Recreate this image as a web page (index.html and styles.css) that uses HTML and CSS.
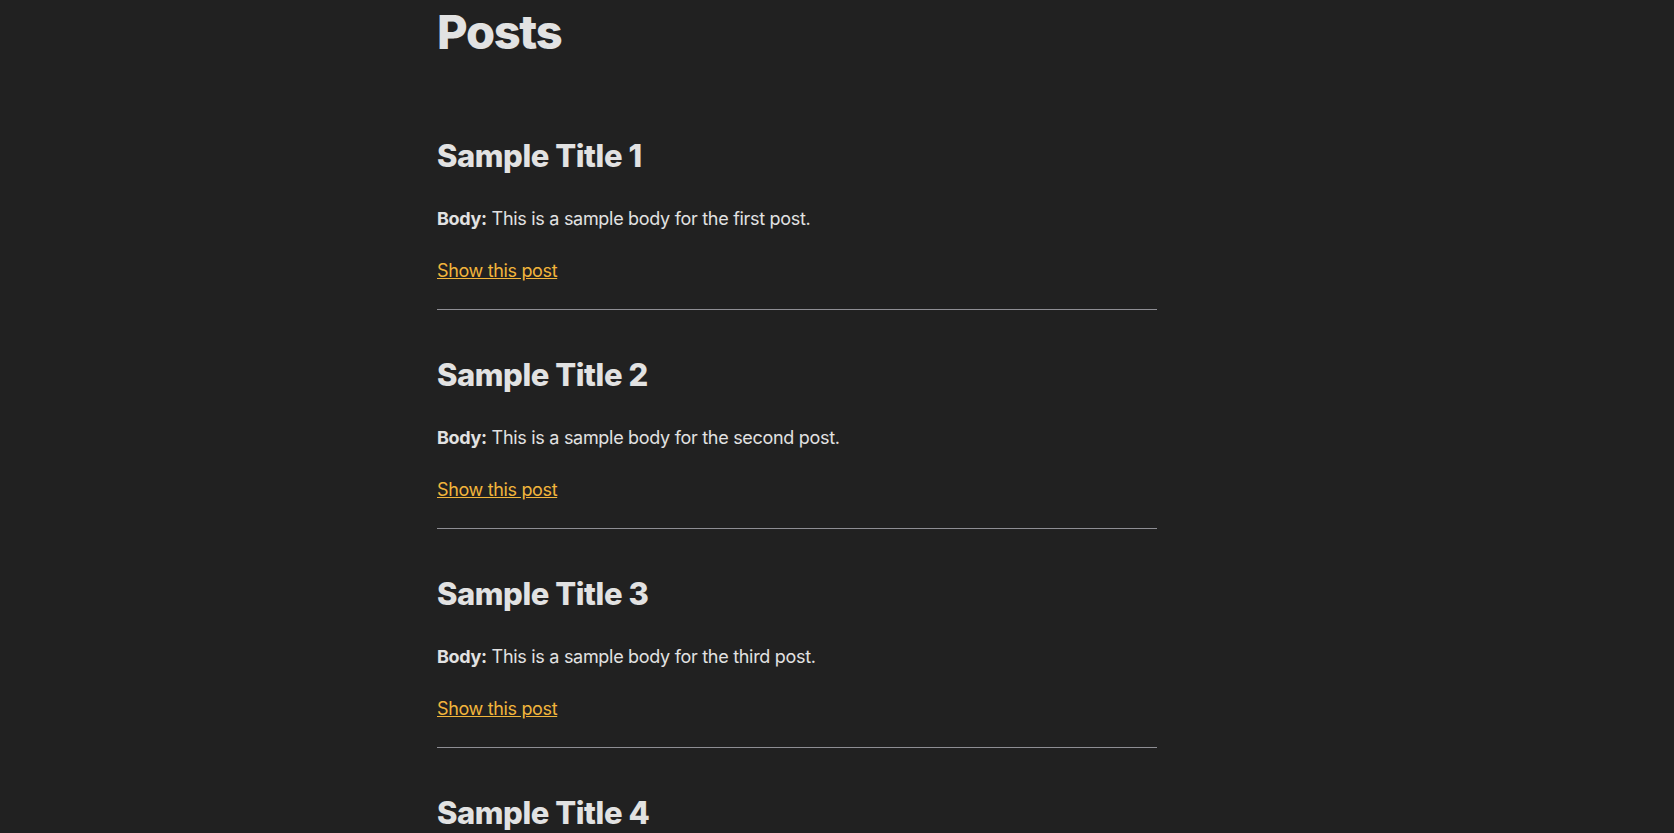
FILE: index.html
```html
<!DOCTYPE html>
<html lang="en">
<head>
<meta charset="utf-8">
<title>Posts</title>
<link rel="stylesheet" href="styles.css">
</head>
<body>
<main class="page">
  <h1 class="page-title">Posts</h1>
  <div class="post-list">
    <article class="post">
      <h2 class="post-title">Sample Title 1</h2>
      <p class="post-body"><strong>Body:</strong> This is a sample body for the first post.</p>
      <p class="post-link"><a href="#">Show this post</a></p>
    </article>
    <article class="post">
      <h2 class="post-title">Sample Title 2</h2>
      <p class="post-body"><strong>Body:</strong> This is a sample body for the second post.</p>
      <p class="post-link"><a href="#">Show this post</a></p>
    </article>
    <article class="post">
      <h2 class="post-title">Sample Title 3</h2>
      <p class="post-body"><strong>Body:</strong> This is a sample body for the third post.</p>
      <p class="post-link"><a href="#">Show this post</a></p>
    </article>
    <article class="post">
      <h2 class="post-title">Sample Title 4</h2>
      <p class="post-body"><strong>Body:</strong> This is a sample body for the fourth post.</p>
      <p class="post-link"><a href="#">Show this post</a></p>
    </article>
  </div>
</main>
</body>
</html>
```
FILE: styles.css
```css
html, body {
  margin: 0;
  padding: 0;
  background: #212121;
}
body {
  color: #e2e2e2;
  font-family: Inter, "Noto Sans", sans-serif;
  font-size: 18px;
}
.page {
  max-width: 800px;
  margin: 0 auto;
}
.page-title {
  width: 720px;
  margin: 3px 0 0;
  font-size: 47px;
  line-height: 58px;
  font-weight: 800;
  letter-spacing: -1.3px;
}
.post-list {
  width: 720px;
  margin-top: 30px;
  display: flex;
  flex-direction: column;
}
.post {
  padding: 47px 0 25px;
  border-bottom: 1px solid #8e8e94;
}
.post-title {
  margin: 0 0 31px;
  font-size: 31px;
  line-height: 36px;
  font-weight: 800;
  letter-spacing: -0.45px;
}
.post-body {
  margin: 0 0 25px;
  line-height: 27px;
  letter-spacing: -0.3px;
}
.post-body strong {
  font-weight: 700;
}
.post-link {
  margin: 0;
  line-height: 27px;
  letter-spacing: -0.35px;
}
.post-link a {
  color: #f2b53c;
  text-decoration: underline;
}
```
